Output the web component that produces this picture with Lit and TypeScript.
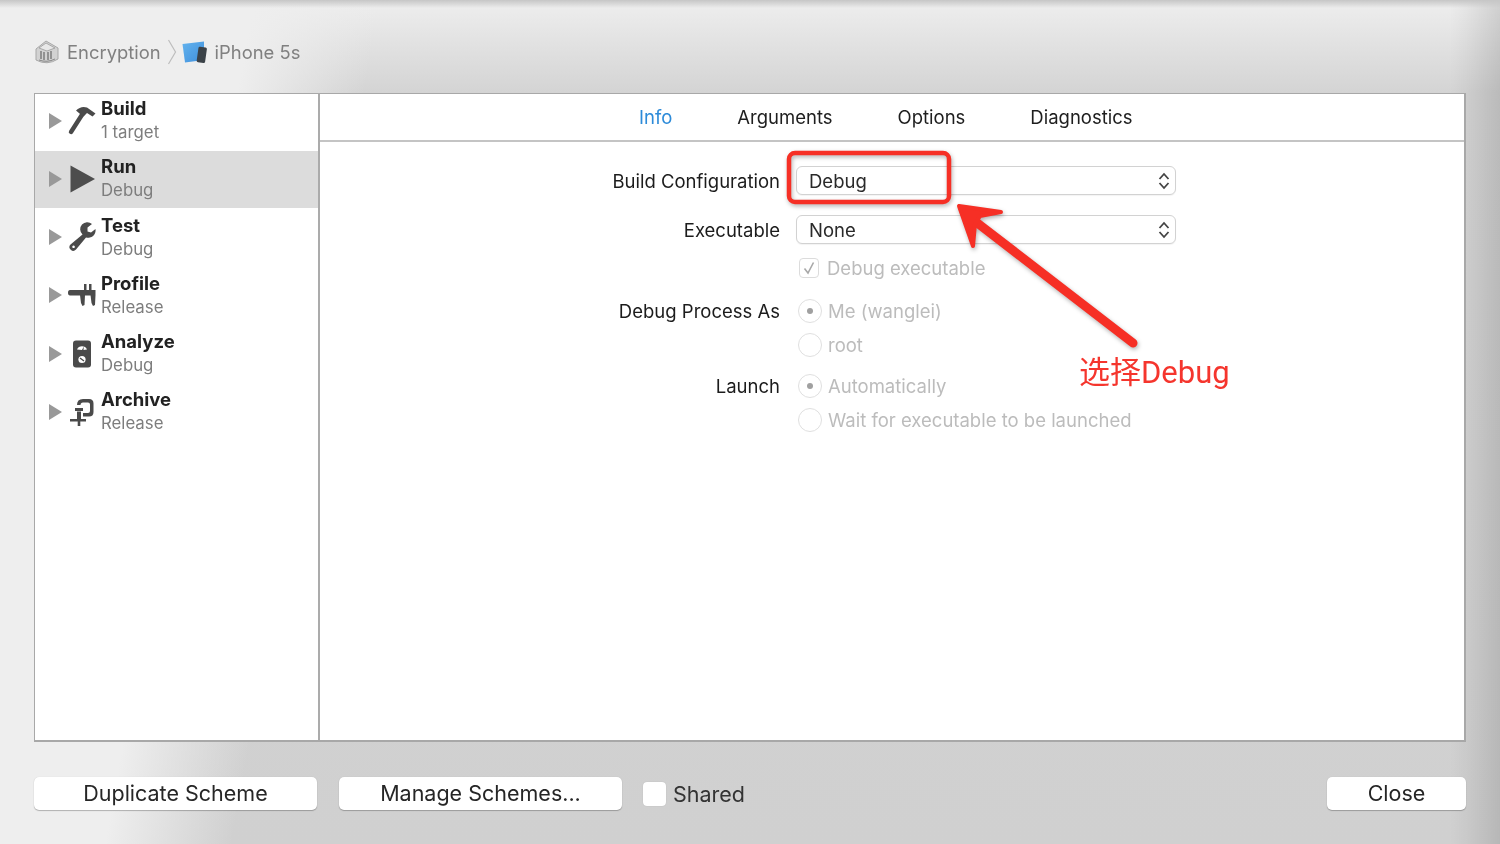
import { LitElement, html, css, svg } from "lit";
import { customElement } from "lit/decorators.js";

const icons: Record<string, unknown> = {
  build: svg`<path d="M3 25 L14.5 7" stroke="#4a4a4a" stroke-width="4.4" stroke-linecap="round" fill="none"/><path d="M8 3.5 Q13 -1.500 19 0.500 L27.500 6.500 L24.500 9.500 L19 6 L15.500 9.500 L11.500 6.500 Z" fill="#4a4a4a"/>`,
  run: svg`<path d="M2.500 0.500 L27 14 L2.500 27.500 Z" fill="#4d4d4d"/>`,
  test: svg`<path fill-rule="evenodd" d="M14.500 11.500 A7 7 0 0 1 24 1 L19.500 4.500 L19.500 8.500 L23 9.500 L27.500 6 A7.500 7.500 0 0 1 18 14.500 L8 26.500 A3.500 3.500 0 0 1 2.500 21.500 Z M5.500 22.500 a1.300 1.300 0 1 0 0.100 0 Z" fill="#4a4a4a"/>`,
  profile: svg`<path d="M2 9 H27.500 V14.500 H2 Q0 14.500 0 11.750 Q0 9 2 9 Z M12 14 H17 L16.500 24 L14.500 25 L13 22 Z M22.500 14 H27.500 L27 24 L25 25 L23.500 22 Z M16 3 H18.500 V9 H16 Z M21 3 H23.500 V9 H21 Z" fill="#4a4a4a"/>`,
  analyze: svg`<rect x="5" y="0.500" width="18" height="27" rx="3" fill="#4a4a4a"/><path d="M9 9.500 A5.500 5.500 0 0 1 19 9.500 L15.500 10 L15.800 6.500 L14 10 Z" fill="#fff"/><circle cx="14" cy="19.500" r="3.600" fill="#fff"/><path d="M12 18 L16 21" stroke="#4a4a4a" stroke-width="1.300"/>`,
  archive: svg`<path d="M9 7 Q9 1 15 1 H21 Q25.500 1 25.500 5.500 V14 Q25.500 18.500 21 18.500 H15 V15 H20 Q22 15 22 13 V6.500 Q22 4.500 20 4.500 H15 Q12.500 4.500 12.500 7 Z" fill="#4a4a4a"/><path d="M7 10 H15 V13 H7 Z M9 13.500 H13 V22 H9 Z M2 21 H18 V23.500 H2 Z M9.700 23 H12.300 V28 H9.700 Z" fill="#4a4a4a"/>`,
};

const chevrons = html`<svg class="updown" viewBox="0 0 14 20"><path d="M2.500 8 L7 3 L11.500 8 M2.500 12 L7 17 L11.500 12"/></svg>`;

@customElement("app-root")
export class AppRoot extends LitElement {
  static styles = css`
    :host {
      display: block;
      width: 1500px;
      height: 844px;
      overflow: hidden;
      font-family: Inter, "Liberation Sans", sans-serif;
      color: #1e1e1e;
    }
    .window {
      position: relative;
      box-sizing: border-box;
      width: 1500px;
      height: 844px;
      padding: 0 34px;
      display: flex;
      flex-direction: column;
      filter: blur(0.35px);
      background:
        linear-gradient(to bottom, #c6c6c6 0, rgba(198, 198, 198, 0) 8px),
        linear-gradient(to left, rgba(0, 0, 0, 0.12) 0, rgba(0, 0, 0, 0.03) 34px, rgba(0, 0, 0, 0) 50px),
        linear-gradient(100deg, #eeeeee 250px, rgba(238, 238, 238, 0) 375px),
        linear-gradient(to bottom, #ececec 8px, #d4d4d4 92px, #d0d0d0 100%);
    }
    .crumbs {
      height: 93px;
      flex: none;
      box-sizing: border-box;
      padding-top: 11px;
      display: flex;
      align-items: center;
      font-size: 18.400px;
      color: #808080;
    }
    .project { width: 26px; height: 26px; margin-right: 7px; }
    .sep { width: 10px; height: 26px; margin: 0 5px 0 6px; }
    .device { width: 25px; height: 22px; margin-right: 8px; }
    .panel {
      height: 649px;
      flex: none;
      box-sizing: border-box;
      background: #fff;
      border-style: solid;
      border-color: #a8a8a8;
      border-width: 1px 2px 2px 1px;
      display: flex;
    }
    .side {
      width: 283px;
      flex: none;
      border-right: 2px solid #ababab;
      box-sizing: content-box;
      display: flex;
      flex-direction: column;
      gap: 1.300px;
      margin-top: -1px;
    }
    .row {
      height: 57px;
      flex: none;
      box-sizing: border-box;
      padding-left: 14px;
      display: flex;
      align-items: center;
    }
    .row.on { background: #dcdcdc; }
    .tri { width: 13px; height: 16px; flex: none; fill: #999; margin: 0 6px 2px 0; }
    .ic { width: 28px; height: 28px; flex: none; overflow: visible; margin: 0 5px 2px 0; }
    .names { display: flex; flex-direction: column; margin-bottom: 3px; }
    .name { font-weight: 700; font-size: 18.500px; line-height: 24px; color: #222; }
    .sub { font-size: 16.800px; line-height: 24px; color: #7d7d7d; }
    .main { flex: 1; display: flex; flex-direction: column; min-width: 0; }
    .tabs {
      height: 48px;
      flex: none;
      box-sizing: border-box;
      border-bottom: 2px solid #c4c4c4;
      display: flex;
      align-items: center;
      padding-left: 319px;
      gap: 65px;
      font-size: 18.500px;
    }
    .tabs .cur { color: #2d8bd9; }
    .form {
      display: grid;
      grid-template-columns: 460px 380px;
      column-gap: 16px;
      padding-top: 24px;
      font-size: 18.500px;
      align-items: center;
    }
    .lbl { text-align: right; grid-column: 1; color: #1c1c1c; }
    .ctl { grid-column: 2; display: flex; align-items: center; height: 24px; padding-left: 2px; color: #bcbcbc; gap: 6px; }
    .select {
      grid-column: 2;
      height: 29px;
      box-sizing: border-box;
      border: 1px solid #d2d2d2;
      border-radius: 6px;
      background: #fff;
      box-shadow: 0 1px 1px rgba(0, 0, 0, 0.05);
      display: flex;
      align-items: center;
      justify-content: space-between;
      padding: 0 4px 0 12px;
      color: #2a2a2a;
    }
    .mt20 { margin-top: 20px; }
    .mt12 { margin-top: 12px; }
    .mt19 { margin-top: 19px; }
    .mt10 { margin-top: 10px; }
    .mt17 { margin-top: 17px; }
    .updown { width: 14px; height: 20px; fill: none; stroke: #444; stroke-width: 1.800; }
    .check {
      width: 20px;
      height: 20px;
      box-sizing: border-box;
      border: 1px solid #dcdcdc;
      border-radius: 4px;
      flex: none;
      margin: 0 2px 0 1px;
    }
    .check svg { display: block; width: 18px; height: 18px; fill: none; stroke: #a8a8a8; stroke-width: 1.600; }
    .radio {
      width: 24px;
      height: 24px;
      box-sizing: border-box;
      border: 1.500px solid #e0e0e0;
      border-radius: 50%;
      flex: none;
      display: flex;
      align-items: center;
      justify-content: center;
    }
    .radio.set::after {
      content: "";
      width: 6px;
      height: 6px;
      border-radius: 50%;
      background: #a0a0a0;
    }
    .foot {
      flex: 1;
      display: flex;
      align-items: flex-start;
      padding-top: 35px;
      font-size: 21.500px;
    }
    .btn {
      height: 33px;
      box-sizing: border-box;
      width: 283px;
      padding-bottom: 2px;
      background: #fff;
      border-radius: 5px;
      box-shadow: 0 1px 1px rgba(0, 0, 0, 0.25), 0 0 1px rgba(0, 0, 0, 0.15);
      display: flex;
      align-items: center;
      justify-content: center;
      color: #262626;
    }
    .btn + .btn { margin-left: 22px; }
    .share { display: flex; align-items: center; gap: 7px; margin: 5px 0 0 21px; height: 24px; color: #333; }
    .share i {
      width: 23px;
      height: 24px;
      background: #fff;
      border-radius: 4px;
      box-shadow: 0 0 1px rgba(0, 0, 0, 0.2);
    }
    .close { width: 139px; margin-left: auto; }
    .mark {
      position: absolute;
      left: 0;
      top: 0;
      width: 1500px;
      height: 844px;
      pointer-events: none;
      filter: drop-shadow(1px 2px 2px rgba(0, 0, 0, 0.3));
    }
    .note {
      position: absolute;
      left: 1079px;
      top: 351px;
      font-size: 31px;
      line-height: 44px;
      color: #f5352d;
      font-family: Roboto, "Noto Sans CJK SC", sans-serif;
      white-space: nowrap;
    }
  `;

  private rows = [
    ["build", "Build", "1 target"],
    ["run", "Run", "Debug"],
    ["test", "Test", "Debug"],
    ["profile", "Profile", "Release"],
    ["analyze", "Analyze", "Debug"],
    ["archive", "Archive", "Release"],
  ];

  render() {
    return html`
      <div class="window">
        <div class="crumbs">
          <svg class="project" viewBox="0 0 26 26">
            <path d="M2 10 L12 2 L24 9 L24 20 Q13 27 2 21 Z" fill="#d2d2d2" stroke="#a8a8a8"/>
            <path d="M5 9 L12 4 L21 9 L13 12 Z" fill="#e8e8e8" stroke="#9a9a9a" stroke-width="0.800"/>
            <path d="M7 12 V20 M10 13 V21 M14 13 V21 M17 12 V20" stroke="#777" stroke-width="1.400"/>
            <path d="M5 21 Q13 24 21 20" stroke="#888" fill="none"/>
          </svg>
          <span>Encryption</span>
          <svg class="sep" viewBox="0 0 10 26"><path d="M1.500 1 L8.500 13 L1.500 25" fill="none" stroke="#bdbdbd" stroke-width="1.200"/></svg>
          <svg class="device" viewBox="0 0 25 22">
            <defs><linearGradient id="dv" x1="0" y1="0" x2="1" y2="1"><stop offset="0" stop-color="#63b3ee"/><stop offset="1" stop-color="#3f8fdc"/></linearGradient></defs>
            <path d="M0.500 3 L22 0.500 L22 19 L3 21.500 Z" fill="url(#dv)"/>
            <rect x="15.500" y="6" width="8.500" height="15.500" rx="1.500" transform="rotate(8 19 14)" fill="#3b4248"/>
          </svg>
          <span>iPhone 5s</span>
        </div>
        <div class="panel">
          <div class="side">
            ${this.rows.map(
              ([ic, name, sub], i) => html`
                <div class="row ${i === 1 ? "on" : ""}">
                  <svg class="tri" viewBox="0 0 13 16"><path d="M0 0 L13 8 L0 16 Z"/></svg>
                  <svg class="ic" viewBox="0 0 28 28">${icons[ic]}</svg>
                  <div class="names"><span class="name">${name}</span><span class="sub">${sub}</span></div>
                </div>
              `
            )}
          </div>
          <div class="main">
            <div class="tabs">
              <span class="cur">Info</span><span>Arguments</span><span>Options</span><span>Diagnostics</span>
            </div>
            <div class="form">
              <div class="lbl">Build Configuration</div>
              <div class="select"><span>Debug</span>${chevrons}</div>
              <div class="lbl mt20">Executable</div>
              <div class="select mt20"><span>None</span>${chevrons}</div>
              <div class="ctl mt12">
                <span class="check"><svg viewBox="0 0 18 18"><path d="M4.500 9.500 L8 14 L13.500 3.500"/></svg></span>
                <span>Debug executable</span>
              </div>
              <div class="lbl mt19">Debug Process As</div>
              <div class="ctl mt19"><span class="radio set"></span><span>Me (wanglei)</span></div>
              <div class="ctl mt10"><span class="radio"></span><span>root</span></div>
              <div class="lbl mt17">Launch</div>
              <div class="ctl mt17"><span class="radio set"></span><span>Automatically</span></div>
              <div class="ctl mt10"><span class="radio"></span><span>Wait for executable to be launched</span></div>
            </div>
          </div>
        </div>
        <div class="foot">
          <div class="btn">Duplicate Scheme</div>
          <div class="btn">Manage Schemes...</div>
          <div class="share"><i></i><span>Shared</span></div>
          <div class="btn close">Close</div>
        </div>
        <svg class="mark" viewBox="0 0 1500 844">
          <rect x="789" y="153" width="160" height="49" rx="6" fill="none" stroke="#f62f25" stroke-width="4.500"/>
          <path d="M1133 343 L976 222" stroke="#f62f25" stroke-width="9" stroke-linecap="round" fill="none"/>
          <path d="M959 206 L1001 212 L980 216 L975 224 L973 246 Z" fill="#f62f25" stroke="#f62f25" stroke-width="4" stroke-linejoin="round"/>
        </svg>
        <div class="note">选择Debug</div>
      </div>
    `;
  }
}
